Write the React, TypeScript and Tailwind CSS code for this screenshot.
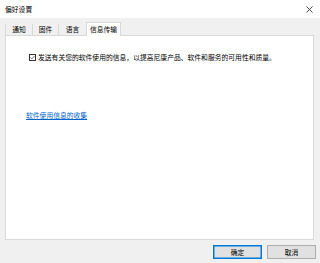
import React, { useState } from "react";

export default function App() {
  const [active, setActive] = useState<string>("信息传输");
  const [checked, setChecked] = useState<boolean>(true);
  const tabs = ["通知", "固件", "语言", "信息传输"];

  return (
    <div
      className="w-[320px] h-[263px] bg-[#f0f0f0] flex flex-col text-[6.8px] leading-none text-[#000] overflow-hidden"
      style={{ fontFamily: '"Noto Sans CJK SC", "Noto Sans", sans-serif' }}
    >
      {/* Title bar */}
      <div className="h-[18px] bg-white flex items-center justify-between pl-[5px] pr-[7px]">
        <span>偏好设置</span>
        <svg width="7" height="7" viewBox="0 0 7 7" className="text-[#333]">
          <path d="M0.5 0.5 L6.5 6.5 M6.5 0.5 L0.5 6.5" stroke="currentColor" strokeWidth="0.9" />
        </svg>
      </div>

      {/* Tabs */}
      <div className="flex items-end pl-[5px] mt-[4px] h-[13px] relative z-10">
        {tabs.map((t) => (
          <button
            key={t}
            onClick={() => setActive(t)}
            className={`flex items-center justify-center border-[#d9d9d9] ${
              active === t
                ? "h-[14px] bg-white border-l border-t border-r mb-[-1px] w-[35px]"
                : "h-[11px] border-l px-0"
            } ${t === "通知" ? "w-[27px]" : t === "固件" ? "w-[26px]" : t === "语言" ? "w-[28px]" : ""}`}
          >
            {t}
          </button>
        ))}
      </div>

      {/* Panel */}
      <div className="ml-[5px] mr-[6px] h-[205px] bg-white border border-[#d9d9d9] flex flex-col pl-[23px] pt-[18px]">
        <label className="flex items-center gap-[1px] cursor-pointer">
          <span
            onClick={() => setChecked(!checked)}
            className="w-[7px] h-[7px] border border-[#333] bg-white flex items-center justify-center"
          >
            {checked && (
              <svg width="5" height="5" viewBox="0 0 5 5">
                <path d="M0.6 2.6 L1.9 3.9 L4.4 1" fill="none" stroke="#333" strokeWidth="0.7" />
              </svg>
            )}
          </span>
          <span className="ml-[1px]">发送有关您的软件使用的信息，以提高尼康产品、软件和服务的可用性和质量。</span>
        </label>

        <a href="#" className="mt-[51px] -ml-[3px] text-[#0066cc] underline w-fit">
          软件使用信息的收集
        </a>
      </div>

      {/* Buttons */}
      <div className="flex justify-end gap-[5px] pr-[4px] mt-[5px]">
        <button className="w-[49px] h-[14px] bg-[#e1e1e1] border border-[#0078d7] shadow-[inset_0_0_0_0.5px_#0078d7]">
          确定
        </button>
        <button className="w-[49px] h-[14px] bg-[#e1e1e1] border border-[#adadad]">取消</button>
      </div>
    </div>
  );
}
